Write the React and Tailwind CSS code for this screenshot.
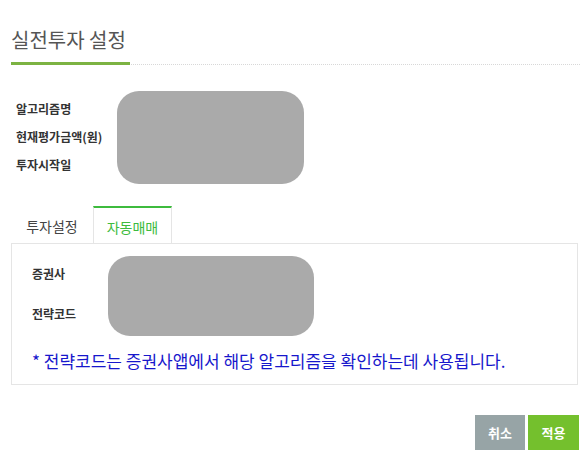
import React, { useState } from 'react';

const font = { fontFamily: '"Noto Sans CJK KR", "Noto Sans", sans-serif' };

function Blob({ className }) {
  return <div className={`rounded-[22px] bg-[#aaaaaa] ${className}`} />;
}

export default function App() {
  const [tab, setTab] = useState('auto');

  return (
    <div className="w-[586px] h-[459px] bg-white text-[#333]" style={font}>
      <div className="pl-[11px] pr-[8px] pt-[26px]">
        <div className="flex items-end border-b border-dotted border-[#d8d8d8] mr-[-2px]">
          <h1 className="text-[20px] leading-[28px] text-[#555] pb-[8px] border-b-[3px] border-[#7cb342] -mb-px w-[119px] whitespace-nowrap">
            실전투자 설정
          </h1>
        </div>

        <div className="flex mt-[26px]">
          <div className="flex flex-col gap-[10px] pt-[9px] pl-[5px] w-[106px] text-[12px] font-bold leading-[18px] text-[#333]">
            <span>알고리즘명</span>
            <span>현재평가금액(원)</span>
            <span>투자시작일</span>
          </div>
          <Blob className="w-[187px] h-[93px]" />
        </div>

        <div className="flex mt-[22px] text-[14px] leading-[18px]">
          <button
            onClick={() => setTab('invest')}
            className={`w-[82px] h-[37px] pt-[2px] ${tab === 'invest' ? 'border-x border-t-2 border-x-[#e5e5e5] border-t-[#3dbb3d] text-[#3dbb3d] bg-white -mb-px' : 'text-[#444]'}`}
          >
            투자설정
          </button>
          <button
            onClick={() => setTab('auto')}
            className={`w-[79px] h-[37px] pt-[2px] ${tab === 'auto' ? 'border-x border-t-2 border-x-[#e5e5e5] border-t-[#3dbb3d] text-[#3dbb3d] bg-white relative z-10 -mb-px' : 'text-[#444]'}`}
          >
            자동매매
          </button>
        </div>

        <div className="border border-[#e5e5e5] h-[142px] pl-[20px] pt-[12px]">
          <div className="flex">
            <div className="flex flex-col gap-[22px] pt-[9px] w-[76px] text-[12px] font-bold leading-[18px]">
              <span>증권사</span>
              <span>전략코드</span>
            </div>
            <Blob className="w-[206px] h-[80px]" />
          </div>
          <p className="mt-[15px] text-[17px] leading-[20px] text-[#1717cc] whitespace-nowrap">
            * 전략코드는 증권사앱에서 해당 알고리즘을 확인하는데 사용됩니다.
          </p>
        </div>

        <div className="flex justify-end gap-[3px] mt-[30px] mr-[-1px] text-[13px] text-white font-bold">
          <button className="w-[50px] h-[35px] bg-[#97a4a6]">취소</button>
          <button className="w-[51px] h-[35px] bg-[#74c02d]">적용</button>
        </div>
      </div>
    </div>
  );
}
